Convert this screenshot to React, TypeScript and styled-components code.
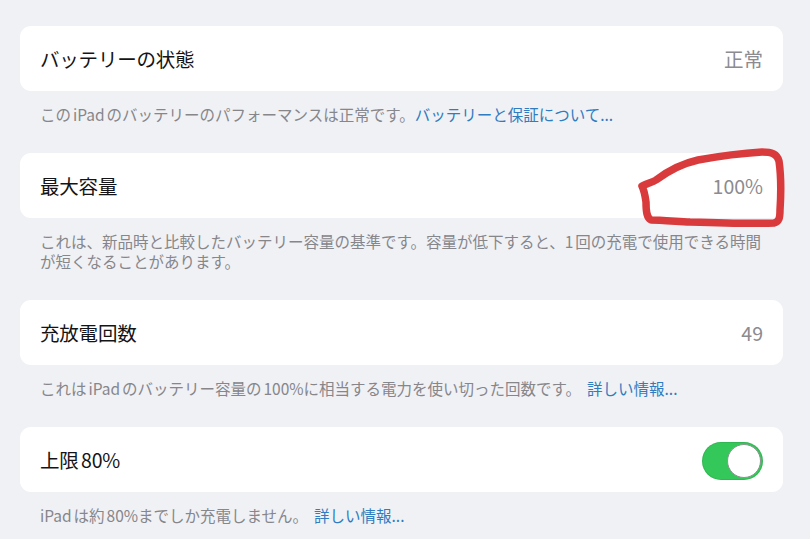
import React from 'react';
import styled, { createGlobalStyle } from 'styled-components';

const GlobalStyle = createGlobalStyle`
  html, body {
    margin: 0;
    padding: 0;
    background: #f0f1f5;
  }
  body {
    font-family: 'Noto Sans CJK JP', 'Noto Sans', sans-serif;
    -webkit-font-smoothing: antialiased;
    text-autospace: normal;
  }
`;

const Page = styled.div`
  position: relative;
  width: 810px;
  height: 539px;
  overflow: hidden;
  box-sizing: border-box;
  padding: 26px 27px 0 20px;
  background: #f0f1f5;
`;

const Section = styled.section`
  margin-bottom: 29px;
`;

const Card = styled.div`
  height: 65px;
  box-sizing: border-box;
  padding: 0 20px;
  display: flex;
  align-items: center;
  justify-content: space-between;
  background: #ffffff;
  border-radius: 11px;
`;

const Title = styled.span`
  font-size: 19.5px;
  color: #141416;
  letter-spacing: -0.2px;
`;

const Value = styled.span`
  font-size: 19.5px;
  color: #8b8b90;
`;

const Footnote = styled.p`
  margin: 0;
  padding: 13px 18px 0 20px;
  font-size: 15.5px;
  line-height: 20px;
  color: #86868b;
`;

const Link = styled.a<{ spaced?: boolean }>`
  color: #2f7cc0;
  text-decoration: none;
  margin-left: ${({ spaced }) => (spaced ? '6px' : '0')};
`;

const Toggle = styled.span<{ on: boolean }>`
  position: relative;
  width: 61px;
  height: 38px;
  border-radius: 19px;
  background: ${({ on }) => (on ? '#34c759' : '#e5e5ea')};
  box-shadow: inset 0 0 0 1px rgba(0, 0, 0, 0.08);
  flex-shrink: 0;
  margin-top: 2px;
`;

const Knob = styled.span<{ on: boolean }>`
  position: absolute;
  top: 2px;
  left: ${({ on }) => (on ? '25px' : '2px')};
  width: 34px;
  height: 34px;
  box-sizing: border-box;
  border-radius: 50%;
  background: #ffffff;
  border: 1.5px solid #8c9490;
`;

const Scribble = styled.svg`
  position: absolute;
  left: 620px;
  top: 140px;
  width: 190px;
  height: 90px;
  pointer-events: none;
`;

type Row = {
  title: string;
  value?: string;
  toggle?: boolean;
  note: React.ReactNode;
};

const rows: Row[] = [
  {
    title: 'バッテリーの状態',
    value: '正常',
    note: (
      <>
        このiPadのバッテリーのパフォーマンスは正常です。
        <Link>バッテリーと保証について...</Link>
      </>
    ),
  },
  {
    title: '最大容量',
    value: '100%',
    note: 'これは、新品時と比較したバッテリー容量の基準です。容量が低下すると、1回の充電で使用できる時間が短くなることがあります。',
  },
  {
    title: '充放電回数',
    value: '49',
    note: (
      <>
        これはiPadのバッテリー容量の100%に相当する電力を使い切った回数です。
        <Link spaced>詳しい情報...</Link>
      </>
    ),
  },
  {
    title: '上限80%',
    toggle: true,
    note: (
      <>
        iPadは約80%までしか充電しません。
        <Link spaced>詳しい情報...</Link>
      </>
    ),
  },
];

export default function App() {
  return (
    <>
      <GlobalStyle />
      <Page>
        {rows.map((row) => (
          <Section key={row.title}>
            <Card>
              <Title>{row.title}</Title>
              {row.toggle !== undefined ? (
                <Toggle on={row.toggle}>
                  <Knob on={row.toggle} />
                </Toggle>
              ) : (
                <Value>{row.value}</Value>
              )}
            </Card>
            <Footnote>{row.note}</Footnote>
          </Section>
        ))}

        {/* red hand-drawn circle around the capacity value */}
        <Scribble viewBox="0 0 190 90">
          <path
            d="M22 46 C28 43 33 42 36 40 C48 31 60 24 78 20 C100 16 125 13 142 12 C152 12 157 14 159 21 C161 35 161 55 160 70 C160 78 159 82 154 83 C130 84 100 83 70 82 C52 81 38 80 31 80 C27 78 26 72 26 62 C25 55 24 50 22 46 Z"
            fill="none"
            stroke="#d93b3d"
            strokeWidth={7.5}
            strokeLinecap="round"
            strokeLinejoin="round"
          />
        </Scribble>
      </Page>
    </>
  );
}
